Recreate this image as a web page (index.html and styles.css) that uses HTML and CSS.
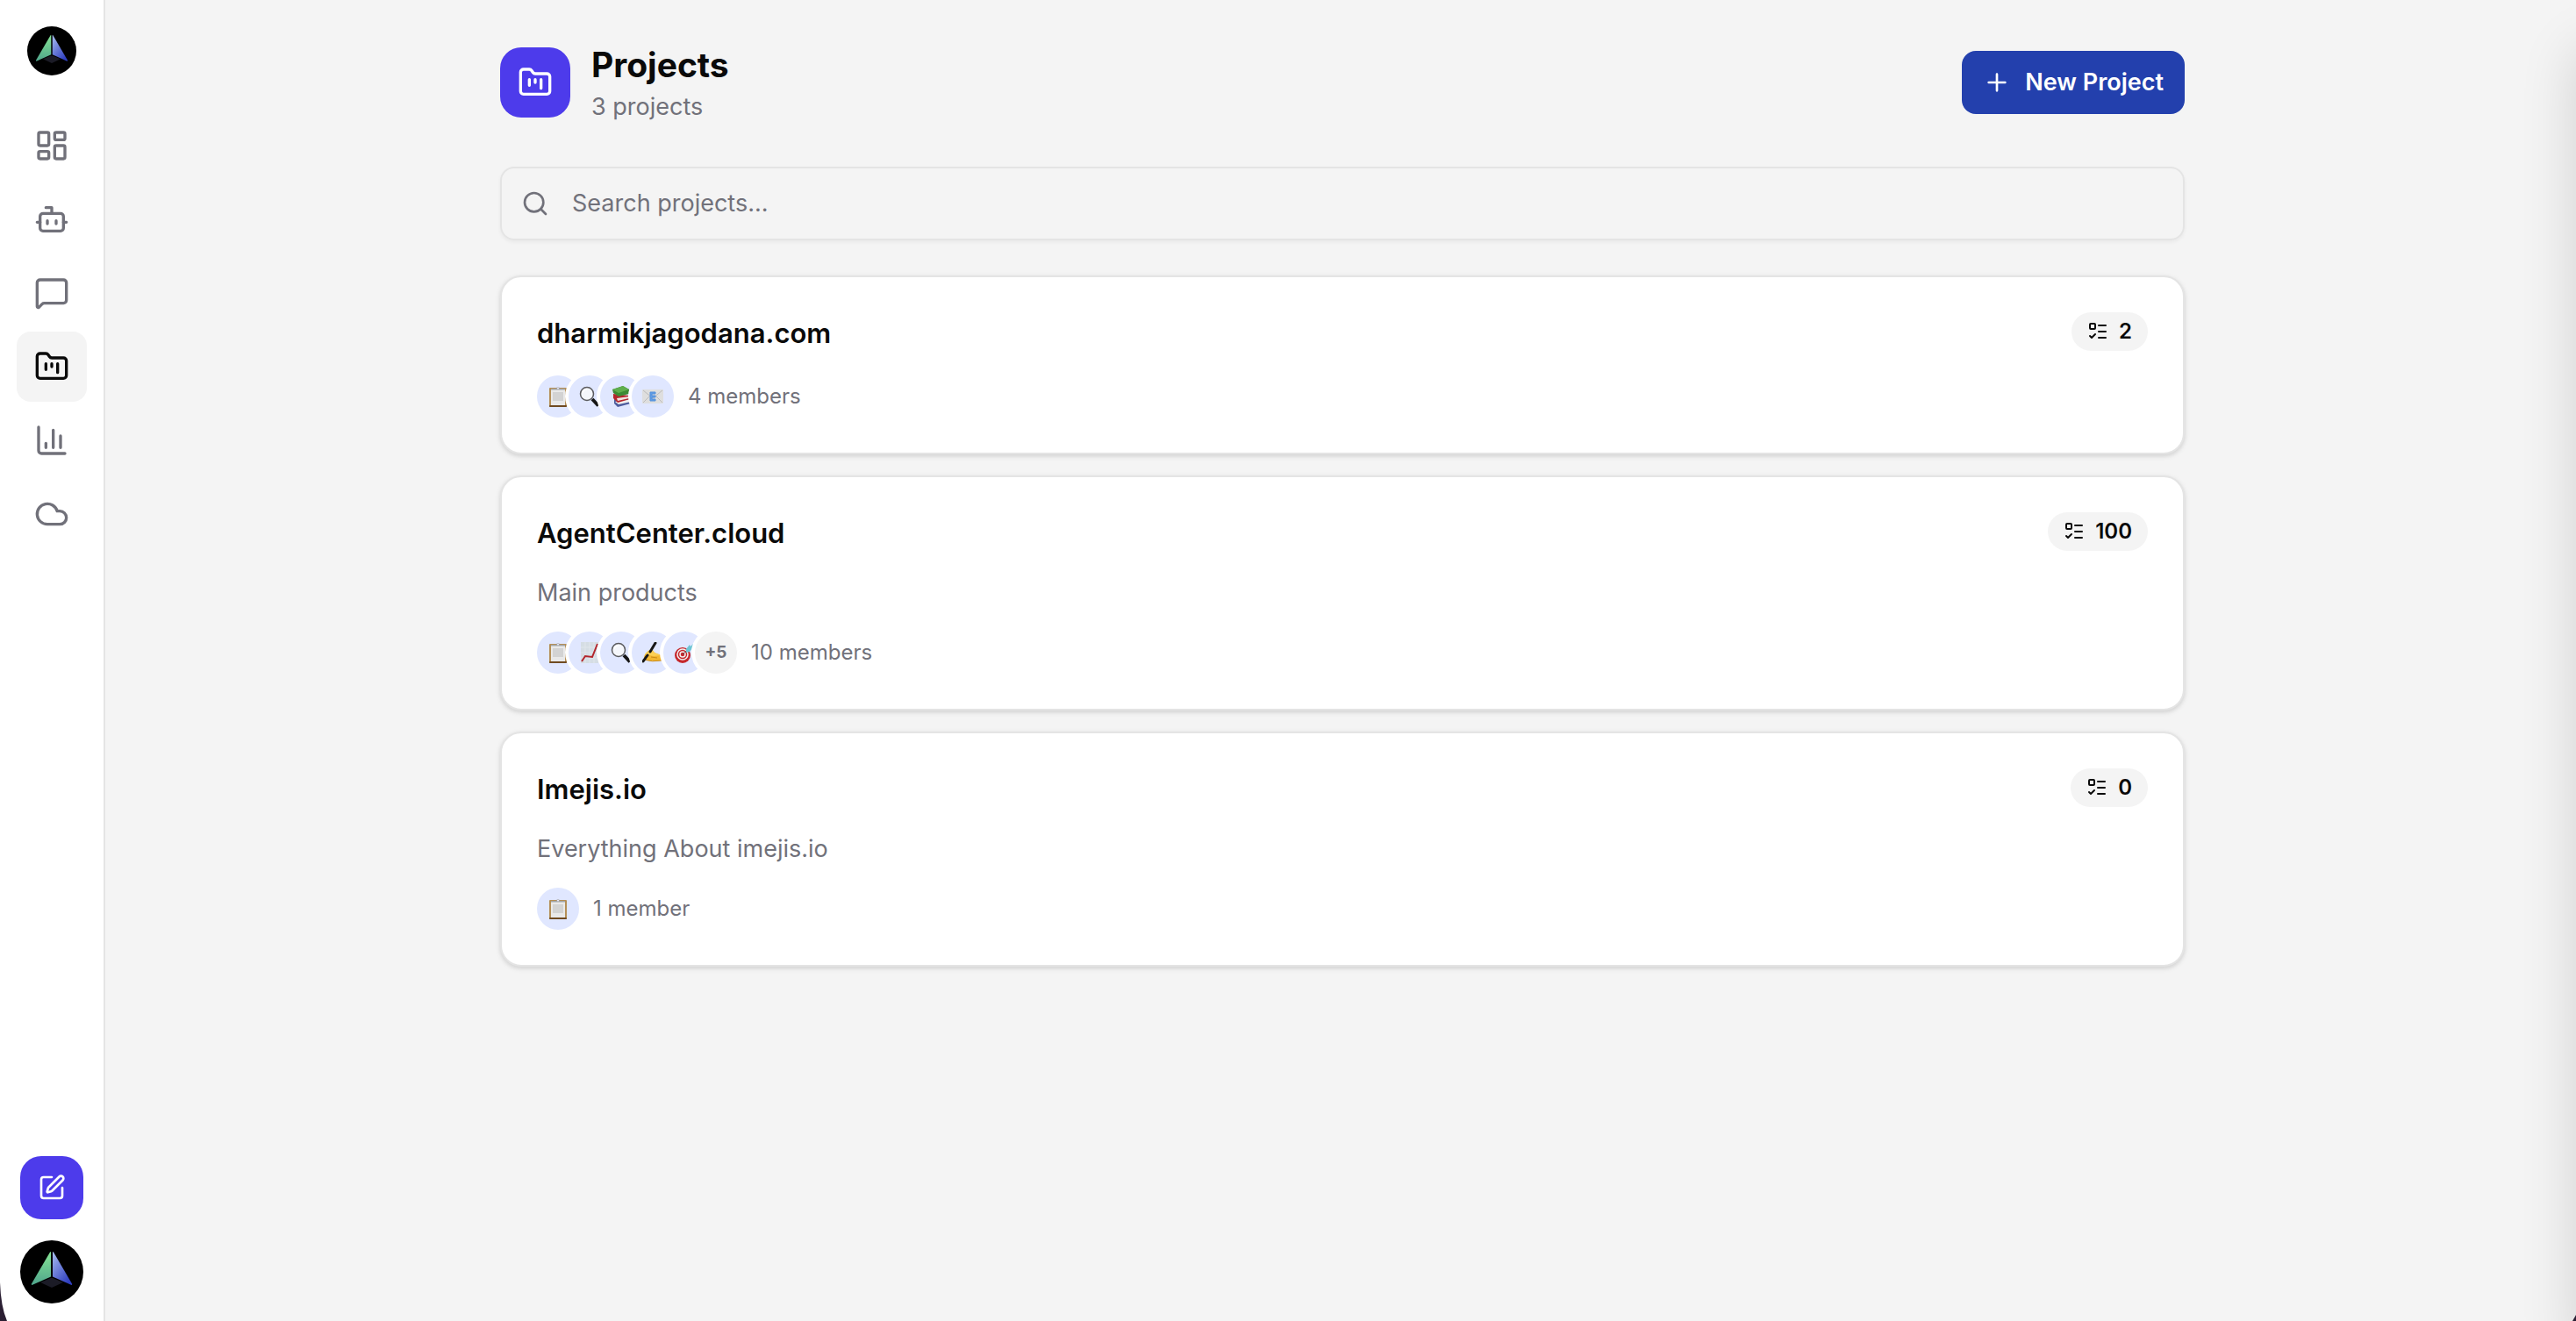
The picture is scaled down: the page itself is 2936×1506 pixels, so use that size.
FILE: index.html
```
<!DOCTYPE html>
<html lang="en">
  <head>
    <meta charset="UTF-8" />
    <meta name="viewport" content="width=device-width, initial-scale=1.0" />
    <title>Projects</title>
    <link rel="stylesheet" href="styles.css">
  </head>
  <body>
    <svg class="sprite" aria-hidden="true">
      <defs>
        <linearGradient id="wing-green" x1="0" y1="0" x2="0" y2="1">
          <stop offset="0" stop-color="#86e595" />
          <stop offset="1" stop-color="#4fa58c" />
        </linearGradient>
        <linearGradient id="wing-blue" x1="0" y1="0" x2="0.7" y2="1">
          <stop offset="0" stop-color="#a9bdf0" />
          <stop offset="1" stop-color="#2f3fc0" />
        </linearGradient>
      </defs>
      <symbol id="logo" viewBox="0 0 72 72">
        <circle cx="36" cy="36" r="36" fill="#000" />
        <path d="M23 48l12-5h2l12 5-13 6z" fill="#1b1b26" />
        <path d="M35 13v28.500L13.500 51q-1 0-.5-1.500L34 13.500z" fill="url(#wing-green)" />
        <path d="M37 13v28.500L58.500 51q1 0 .5-1.500L38 13.500z" fill="url(#wing-blue)" />
      </symbol>
      <symbol id="folder" viewBox="0 0 24 24">
        <path d="M4 20h16a2 2 0 0 0 2-2V8a2 2 0 0 0-2-2h-7.930a2 2 0 0 1-1.660-.9l-.820-1.200A2 2 0 0 0 7.930 3H4a2 2 0 0 0-2 2v13c0 1.100.9 2 2 2Z" />
        <path d="M8 10v4M12 10v2M16 10v6" />
      </symbol>
      <symbol id="tasks" viewBox="0 0 24 24">
        <rect x="3" y="3" width="6" height="6" rx="1" />
        <path d="m3 17 2 2 4-4M13 5h8M13 12h8M13 19h8" />
      </symbol>
      <symbol id="clipboard" viewBox="0 0 24 24">
        <rect x="2" y="2" width="20" height="22" rx="1" fill="#b58f57" />
        <rect x="2" y="22" width="20" height="2" rx="1" fill="#6f4a22" />
        <path d="M4 4h16v18H4z" fill="#e9e9e9" />
        <path d="M6 7h12v10H6z" fill="#d3d3d3" />
        <path d="M4 4.500V3h6q.5-2 2-2t2 2h6v1.500z" fill="#a2a5a8" />
        <circle cx="12" cy="2.500" r="1" fill="#eef" />
      </symbol>
      <symbol id="magnifier" viewBox="0 0 24 24">
        <path d="m15 15 7 7.500" stroke="#151515" stroke-width="4" />
        <circle cx="9" cy="9" r="7.500" fill="#f5f7fb" stroke="#5b5b5e" stroke-width="1.500" />
        <path d="M4 8q1-4 5-4" fill="none" stroke="#fff" stroke-width="1.500" />
      </symbol>
      <symbol id="books" viewBox="0 0 24 24">
        <path d="m4 15 16-1 3 6-15 4-4-4z" fill="#4d5c9e" />
        <path d="m5 18 17-3 1 3-14 3z" fill="#eee" />
        <path d="m3 9 18 2 1 4-14 4-5-5z" fill="#b5242c" />
        <path d="m7 14 14-2v2L8 17z" fill="#f0e3e0" />
        <path d="M2 4 14 0l7 4v5L9 12 3 8z" fill="#3c8b35" />
        <path d="M2 4 14 0l7 4-12 4z" fill="#5fae4c" />
      </symbol>
      <symbol id="email" viewBox="0 0 24 24">
        <rect x="0" y="4" width="24" height="16" rx="1" fill="#dedede" />
        <path d="m1 5 11 9 11-9M1 19l8-8M23 19l-8-8" fill="none" stroke="#bcbcbc" />
        <path d="M9 7h6v2h-4v2h4v2h-4v2h4v2H9z" fill="#5e9de6" stroke="#5590da" stroke-width="1" />
      </symbol>
      <symbol id="chart" viewBox="0 0 24 24">
        <path d="M2 0h20v24H2z" fill="#d5dde4" />
        <path d="M7 0v24M12 0v24M17 0v24M2 6h20M2 12h20M2 18h20" stroke="#e0e6eb" />
        <path d="m3 22 4-6 8 1 6-15" fill="none" stroke="#b3262c" stroke-width="2" />
      </symbol>
      <symbol id="writing" viewBox="0 0 24 24">
        <path d="M2 17c1-4 5-8 9-9l3 4 8 3v6c-6 1-14 1-20-1z" fill="#f3b733" />
        <path d="M3 14c2-3 5-5 8-6l3 4 7 3-8 1z" fill="#fccf55" />
        <path d="m10 17 7 1M2 20q9 3 20 1" fill="none" stroke="#c98a17" stroke-width="1" />
        <path d="m1 22 5-7M9 11l6-10" stroke="#161616" stroke-width="3" stroke-linecap="round" />
      </symbol>
      <symbol id="target" viewBox="0 0 24 24">
        <circle cx="10" cy="15" r="9" fill="#c5282d" />
        <circle cx="10" cy="14" r="6" fill="none" stroke="#f4eeee" stroke-width="1.500" />
        <circle cx="10" cy="14" r="3" fill="none" stroke="#f4eeee" stroke-width="1.500" />
        <path d="m10 14 8-7" stroke="#6b4d4d" stroke-width="1" />
        <path d="m14 8 4-5 1 2 3-3-1 5-3 4-4 1z" fill="#6cc5d4" />
      </symbol>
    </svg>

    <div class="app">
      <aside class="sidebar">
        <a class="brand" href="#" aria-label="Home"><svg><use href="#logo" /></svg></a>
        <nav class="nav" aria-label="Main">
          <a class="nav-item" href="#" aria-label="Dashboard">
            <svg class="icon" viewBox="0 0 24 24"><rect x="3" y="3" width="7" height="9" rx="1" /><rect x="14" y="3" width="7" height="5" rx="1" /><rect x="14" y="12" width="7" height="9" rx="1" /><rect x="3" y="16" width="7" height="5" rx="1" /></svg>
          </a>
          <a class="nav-item" href="#" aria-label="Agents">
            <svg class="icon" viewBox="0 0 24 24"><path d="M12 8V4H8" /><rect x="4" y="8" width="16" height="12" rx="2" /><path d="M2 14h2M20 14h2M15 13v2M9 13v2" /></svg>
          </a>
          <a class="nav-item" href="#" aria-label="Messages">
            <svg class="icon" viewBox="0 0 24 24"><path d="M22 17a2 2 0 0 1-2 2H6.828a2 2 0 0 0-1.414.586l-2.202 2.202A.710.710 0 0 1 2 21.286V5a2 2 0 0 1 2-2h16a2 2 0 0 1 2 2z" /></svg>
          </a>
          <a class="nav-item active" href="#" aria-label="Projects" aria-current="page">
            <svg class="icon"><use href="#folder" /></svg>
          </a>
          <a class="nav-item" href="#" aria-label="Analytics">
            <svg class="icon" viewBox="0 0 24 24"><path d="M3 3v16a2 2 0 0 0 2 2h16M18 17V9M13 17V5M8 17v-3" /></svg>
          </a>
          <a class="nav-item" href="#" aria-label="Cloud">
            <svg class="icon" viewBox="0 0 24 24"><path d="M17.500 19H9a7 7 0 1 1 6.710-9h1.790a4.500 4.500 0 1 1 0 9Z" /></svg>
          </a>
        </nav>
        <button class="compose" type="button" aria-label="Compose">
          <svg class="icon" viewBox="0 0 24 24"><path d="M12 3H5a2 2 0 0 0-2 2v14a2 2 0 0 0 2 2h14a2 2 0 0 0 2-2v-7" /><path d="M18.375 2.625a1 1 0 0 1 3 3l-9.013 9.014a2 2 0 0 1-.853.505l-2.873.840a.5.5 0 0 1-.620-.620l.840-2.873a2 2 0 0 1 .506-.852z" /></svg>
        </button>
        <button class="account" type="button" aria-label="Account"><svg><use href="#logo" /></svg></button>
      </aside>

      <main class="main">
        <div class="container">
          <header class="page-header">
            <div class="page-icon"><svg class="icon"><use href="#folder" /></svg></div>
            <div class="page-title">
              <h1>Projects</h1>
              <p>3 projects</p>
            </div>
            <button class="new-project" type="button">
              <svg class="icon" viewBox="0 0 24 24"><path d="M5 12h14M12 5v14" /></svg>
              New Project
            </button>
          </header>

          <label class="search">
            <svg class="icon" viewBox="0 0 24 24"><circle cx="11" cy="11" r="8" /><path d="m21 21-4.300-4.300" /></svg>
            <input type="search" placeholder="Search projects..." aria-label="Search projects" />
          </label>

          <article class="card">
            <div class="card-head">
              <h2>dharmikjagodana.com</h2>
              <span class="badge"><svg class="icon"><use href="#tasks" /></svg>2</span>
            </div>
            <div class="members">
              <div class="avatars">
                <span class="avatar"><svg><use href="#clipboard" /></svg></span>
                <span class="avatar"><svg><use href="#magnifier" /></svg></span>
                <span class="avatar"><svg><use href="#books" /></svg></span>
                <span class="avatar"><svg><use href="#email" /></svg></span>
              </div>
              <span>4 members</span>
            </div>
          </article>

          <article class="card">
            <div class="card-head">
              <h2>AgentCenter.cloud</h2>
              <span class="badge"><svg class="icon"><use href="#tasks" /></svg>100</span>
            </div>
            <p class="description">Main products</p>
            <div class="members">
              <div class="avatars">
                <span class="avatar"><svg><use href="#clipboard" /></svg></span>
                <span class="avatar"><svg><use href="#chart" /></svg></span>
                <span class="avatar"><svg><use href="#magnifier" /></svg></span>
                <span class="avatar"><svg><use href="#writing" /></svg></span>
                <span class="avatar"><svg><use href="#target" /></svg></span>
                <span class="avatar more">+5</span>
              </div>
              <span>10 members</span>
            </div>
          </article>

          <article class="card">
            <div class="card-head">
              <h2>Imejis.io</h2>
              <span class="badge"><svg class="icon"><use href="#tasks" /></svg>0</span>
            </div>
            <p class="description">Everything About imejis.io</p>
            <div class="members">
              <div class="avatars">
                <span class="avatar"><svg><use href="#clipboard" /></svg></span>
              </div>
              <span>1 member</span>
            </div>
          </article>
        </div>
      </main>
    </div>

    <div class="drawer"></div>
    <svg class="corner left" viewBox="0 0 8 44" aria-hidden="true"><path d="M0 0q1 28 8 44H0z" /></svg>
    <svg class="corner right" viewBox="0 0 8 44" aria-hidden="true"><path d="M8 37v7H4z" /></svg>
  </body>
</html>
```
FILE: styles.css
```
* {
  box-sizing: border-box;
}
body {
  margin: 0;
  font-family: Inter, "Liberation Sans", sans-serif;
  font-size: 27px;
  line-height: 40px;
  color: #0a0a0a;
  background-color: #f4f4f4;
  overflow-x: hidden;
}
h1,
h2,
p {
  margin: 0;
}
button,
input {
  font: inherit;
  border: 0;
}
button {
  padding: 0;
  cursor: pointer;
}
.sprite {
  position: absolute;
  width: 0;
  height: 0;
}
.icon {
  width: 32px;
  height: 32px;
  flex: none;
  fill: none;
  stroke: currentColor;
  stroke-width: 2;
  stroke-linecap: round;
  stroke-linejoin: round;
}
.app {
  display: flex;
  min-height: 100vh;
}

/* sidebar */
.sidebar {
  position: sticky;
  top: 0;
  display: flex;
  flex-direction: column;
  align-items: center;
  flex: none;
  width: 120px;
  height: 100vh;
  padding: 30px 0 20px;
  background-color: #fff;
  border-right: 2px solid #e4e4e4;
}
.brand,
.brand svg {
  display: block;
  width: 56px;
  height: 56px;
}
.nav {
  display: flex;
  flex-direction: column;
  gap: 4px;
  margin: 40px 0 auto;
}
.nav-item {
  display: flex;
  align-items: center;
  justify-content: center;
  width: 80px;
  height: 80px;
  border-radius: 16px;
  color: #71717a;
}
.nav-item .icon,
.page-icon .icon {
  width: 40px;
  height: 40px;
}
.nav-item.active {
  color: #0a0a0a;
  background-color: #f4f4f4;
}
.compose {
  display: flex;
  align-items: center;
  justify-content: center;
  width: 72px;
  height: 72px;
  margin-bottom: 24px;
  border-radius: 24px;
  color: #fff;
  background-color: #4d3beb;
}
.account,
.account svg {
  display: block;
  width: 72px;
  height: 72px;
  background: none;
}

/* content */
.main {
  flex: 1;
  min-width: 0;
  padding: 48px 32px 48px 36px;
}
.container {
  display: flex;
  flex-direction: column;
  gap: 24px;
  max-width: 1920px;
  margin: 0 auto;
}
.page-header {
  display: flex;
  align-items: center;
  gap: 24px;
  height: 92px;
  margin-bottom: 26px;
}
.page-icon {
  display: flex;
  align-items: center;
  justify-content: center;
  width: 80px;
  height: 80px;
  border-radius: 24px;
  color: #fff;
  background-color: #4d3beb;
}
.page-title {
  flex: 1;
}
.page-title h1 {
  font-size: 39px;
  line-height: 56px;
  font-weight: 700;
}
.page-title p {
  color: #71717a;
}
.new-project {
  display: flex;
  align-items: center;
  gap: 16px;
  height: 72px;
  padding: 0 24px;
  border-radius: 16px;
  font-weight: 600;
  color: #fff;
  background-color: #2340ad;
}
.search {
  display: flex;
  align-items: center;
  gap: 26px;
  height: 84px;
  margin-bottom: 16px;
  padding: 0 22px;
  border: 2px solid #e4e4e4;
  border-radius: 16px;
  color: #71717a;
  box-shadow: 0 2px 4px rgba(0, 0, 0, 0.05);
}
.search input {
  flex: 1;
  min-width: 0;
  padding: 0;
  outline: 0;
  color: #0a0a0a;
  background: none;
}
.search input::placeholder {
  color: #71717a;
  opacity: 1;
}
.card {
  display: flex;
  flex-direction: column;
  gap: 24px;
  padding: 40px;
  background-color: #fff;
  border: 2px solid #e4e4e4;
  border-radius: 24px;
  box-shadow: 0 2px 6px rgba(0, 0, 0, 0.1), 0 2px 4px rgba(0, 0, 0, 0.06);
}
.card-head {
  display: flex;
  align-items: flex-start;
  justify-content: space-between;
}
.card h2 {
  font-size: 31px;
  line-height: 48px;
  font-weight: 600;
}
.badge {
  display: flex;
  align-items: center;
  gap: 12px;
  height: 44px;
  padding: 0 18px;
  border-radius: 22px;
  font-size: 24px;
  font-weight: 600;
  background-color: #f4f4f4;
}
.badge .icon {
  width: 24px;
  height: 24px;
}
.description {
  color: #71717a;
}
.members {
  display: flex;
  align-items: center;
  gap: 16px;
  font-size: 24px;
  color: #71717a;
}
.avatars {
  display: flex;
}
.avatar {
  display: flex;
  align-items: center;
  justify-content: center;
  width: 48px;
  height: 48px;
  border-radius: 50%;
  background-color: #e0e7ff;
  box-shadow: 0 0 0 4px #fff;
}
.avatar + .avatar {
  margin-left: -12px;
}
.avatar svg {
  width: 24px;
  height: 24px;
}
.avatar.more {
  font-size: 19px;
  font-weight: 700;
  background-color: #f4f4f4;
}

/* closed drawer, only its shadow reaches into the page */
.drawer {
  position: fixed;
  top: 56px;
  bottom: -40px;
  left: 100%;
  width: 400px;
  box-shadow: 0 0 60px rgba(0, 0, 0, 0.14);
  pointer-events: none;
}
.corner {
  position: fixed;
  bottom: 0;
  width: 8px;
  height: 44px;
  fill: #2b1f33;
}
.corner.left {
  left: 0;
}
.corner.right {
  right: 0;
}
```
